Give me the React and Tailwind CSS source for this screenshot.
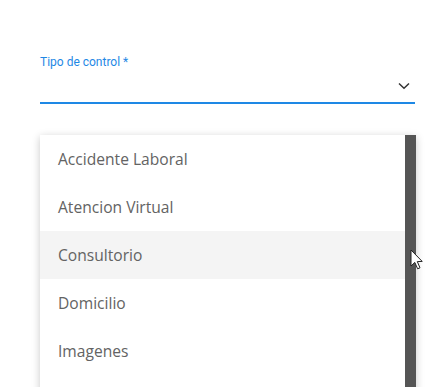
import React from "react";

const items = ["Accidente Laboral", "Atencion Virtual", "Consultorio", "Domicilio", "Imagenes"];

export default function App() {
  return (
    <div className="relative w-[444px] h-[387px] overflow-hidden bg-white">
      <div className="pl-[40px] pr-[29px] pt-[55px]">
        <div className="text-[12px] leading-[14px] text-[#1e88e5] font-['Roboto',sans-serif]">Tipo de control *</div>
        <div className="flex h-[35px] items-center justify-end border-b-2 border-[#1e88e5] pr-[5px]">
          <svg width="12" height="8" viewBox="0 0 12 8" className="mt-[1px]">
            <path d="M1 1.5 L6 6.2 L11 1.5" fill="none" stroke="#333" strokeWidth="1.5" />
          </svg>
        </div>
      </div>
      <div className="ml-[40px] mt-[31px] w-[376px] h-[260px] flex bg-white shadow-[0_2px_8px_rgba(0,0,0,0.22)]">
        <div className="flex-1 flex flex-col">
          {items.map((t, i) => (
            <div
              key={t}
              className={`h-[48px] shrink-0 flex items-center pl-[18px] pt-[1px] text-[15.6px] text-[#636363] font-['Open_Sans',sans-serif] ${i === 2 ? "bg-[#f4f4f4]" : ""}`}
            >
              {t}
            </div>
          ))}
        </div>
        <div className="w-[11px] bg-[#555555]" />
      </div>
      <svg className="absolute left-[410px] top-[249px]" width="14" height="22" viewBox="0 0 14 22">
        <path d="M1 1 L1 17 L4.8 13.4 L7.6 19.8 L10 18.8 L7.3 12.6 L12.2 12.4 Z" fill="white" stroke="#222" strokeWidth="1" strokeLinejoin="round" />
      </svg>
    </div>
  );
}
